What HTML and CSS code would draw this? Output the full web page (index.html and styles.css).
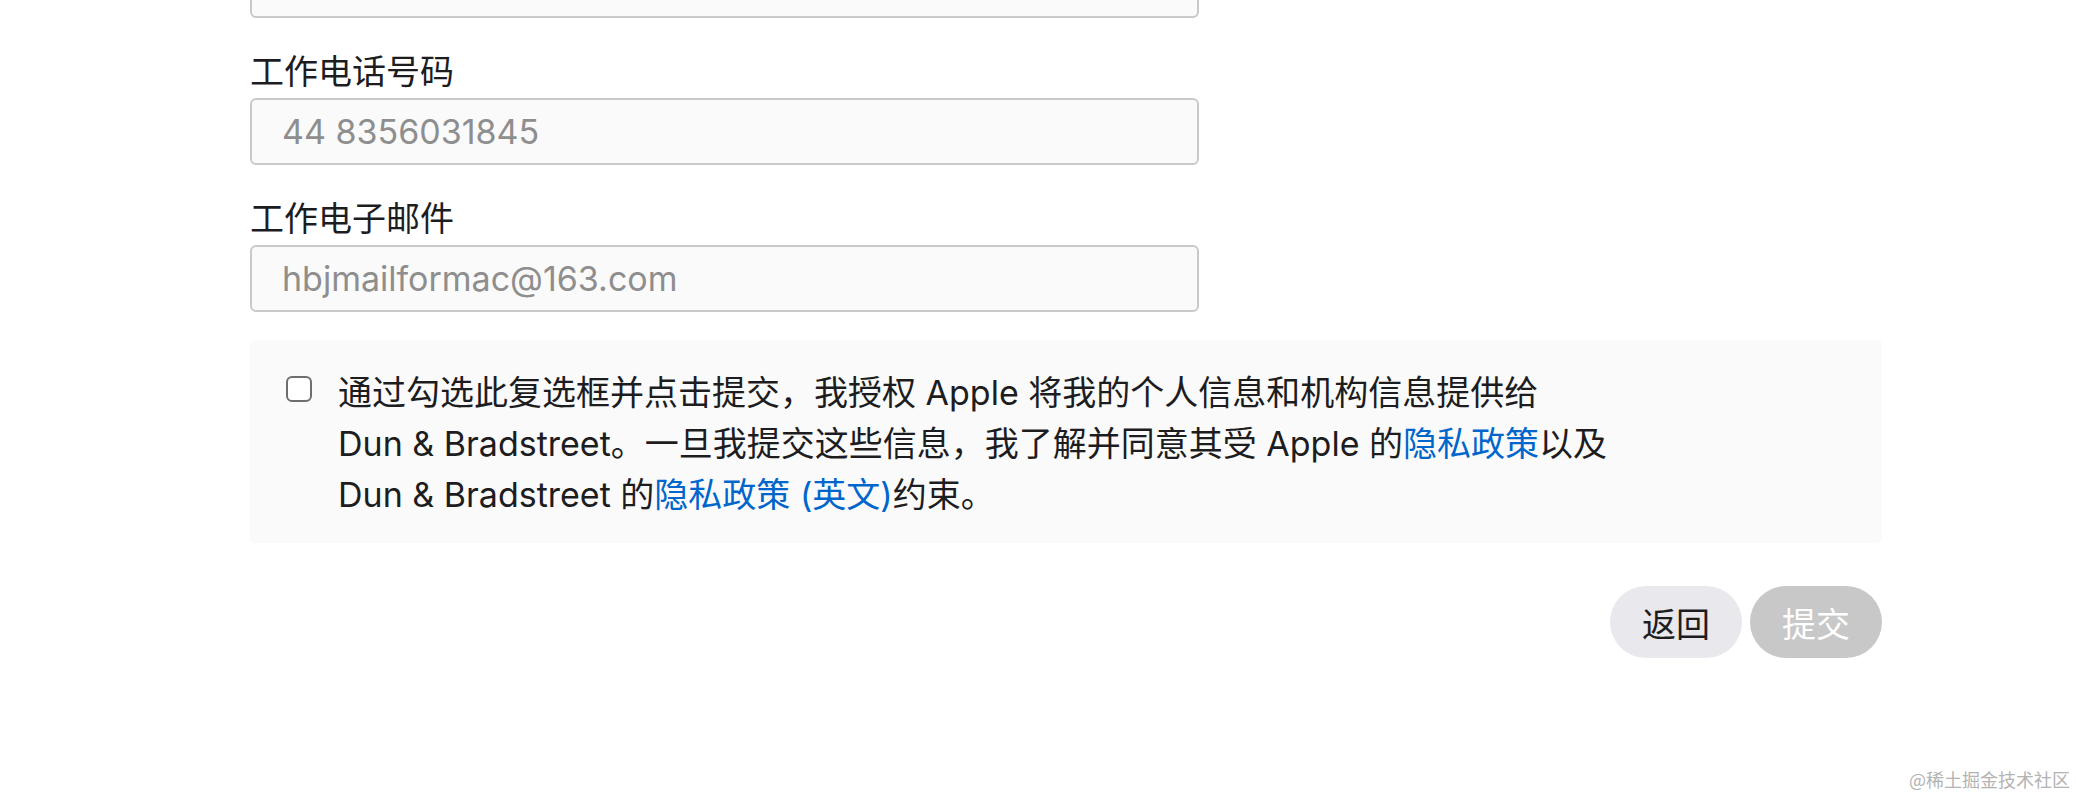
FILE: index.html
```html
<!DOCTYPE html>
<html lang="zh-CN">
<head>
<meta charset="utf-8">
<title>表单</title>
<link rel="stylesheet" href="styles.css">
</head>
<body>
<main class="page">
  <div class="field field-first">
    <input class="text-input" type="text" aria-label="上一字段">
  </div>
  <div class="field">
    <label class="field-label" for="phone">工作电话号码</label>
    <input class="text-input" id="phone" type="text" placeholder="44 8356031845">
  </div>
  <div class="field">
    <label class="field-label" for="email">工作电子邮件</label>
    <input class="text-input" id="email" type="text" placeholder="hbjmailformac@163.com">
  </div>

  <div class="consent">
    <span class="checkbox" role="checkbox" aria-checked="false"></span>
    <p class="consent-text">通过勾选此复选框并点击提交，我授权 Apple 将我的个人信息和机构信息提供给 Dun&nbsp;&amp;&nbsp;Bradstreet。一旦我提交这些信息，我了解并同意其受 Apple 的<a href="#">隐私政策</a>以及 Dun&nbsp;&amp;&nbsp;Bradstreet 的<a href="#">隐私政策 (英文)</a>约束。</p>
  </div>

  <div class="actions">
    <button class="btn btn-back" type="button">返回</button>
    <button class="btn btn-submit" type="button" disabled>提交</button>
  </div>
</main>
<div class="watermark">@稀土掘金技术社区</div>
</body>
</html>
```
FILE: styles.css
```css
html, body {
  margin: 0;
  padding: 0;
  background: #ffffff;
}

body {
  font-family: "Inter", "Noto Sans CJK SC", sans-serif;
  color: #1d1d1f;
  width: 2076px;
  height: 798px;
  overflow: hidden;
  position: relative;
}

.page {
  margin-top: -49px;
  margin-left: 250px;
  width: 1632px;
  display: flex;
  flex-direction: column;
}

.field {
  display: flex;
  flex-direction: column;
  width: 949px;
}

.field-label {
  font-size: 34px;
  line-height: 44px;
  margin-top: 32px;
  margin-bottom: 4px;
  color: #1d1d1f;
}

.text-input {
  box-sizing: border-box;
  height: 67px;
  width: 949px;
  margin: 0;
  padding: 0 30px;
  border: 2px solid #c9c9c9;
  border-radius: 6px;
  background: #fafafa;
  font-family: "Inter", "Noto Sans CJK SC", sans-serif;
  font-size: 34px;
  color: #1d1d1f;
  outline: none;
}

.text-input::placeholder {
  color: #8e8e8e;
  opacity: 1;
}

.consent {
  margin-top: 28px;
  background: #fafafa;
  border-radius: 5px;
  padding: 27px 36px 23px 36px;
  display: flex;
  align-items: flex-start;
  gap: 26px;
}

.checkbox {
  box-sizing: border-box;
  flex: none;
  width: 26px;
  height: 26px;
  margin-top: 9px;
  border: 2.5px solid #6e6e6e;
  border-radius: 6px;
  background: #ffffff;
}

.consent-text {
  margin: 0;
  max-width: 1290px;
  font-size: 34px;
  line-height: 51px;
  color: #1d1d1f;
}

.consent-text a {
  color: #0066cc;
  text-decoration: none;
}

.actions {
  margin-top: 43px;
  display: flex;
  justify-content: flex-end;
  gap: 8px;
}

.btn {
  box-sizing: border-box;
  height: 72px;
  width: 132px;
  border: none;
  border-radius: 36px;
  font-family: "Inter", "Noto Sans CJK SC", sans-serif;
  font-size: 34px;
  padding: 0;
}

.btn-back {
  background: #e8e8ed;
  color: #1d1d1f;
}

.btn-submit {
  background: #c8c8c8;
  color: #ffffff;
}

.watermark {
  position: absolute;
  right: 6px;
  bottom: 9px;
  font-family: "Noto Sans CJK SC", sans-serif;
  font-size: 18px;
  line-height: 20px;
  color: #b3b3b3;
}
```
